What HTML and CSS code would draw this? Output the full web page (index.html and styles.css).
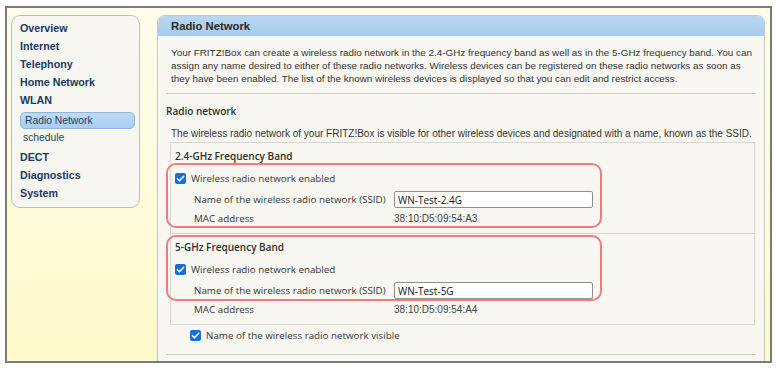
FILE: index.html
```html
<!DOCTYPE html>
<html lang="en">
<head>
<meta charset="utf-8">
<title>Radio Network</title>
<link rel="stylesheet" href="styles.css">
</head>
<body>
<div class="frame">
  <nav class="sidebar">
    <a class="nav-item">Overview</a>
    <a class="nav-item">Internet</a>
    <a class="nav-item">Telephony</a>
    <a class="nav-item">Home Network</a>
    <a class="nav-item">WLAN</a>
    <a class="sub-item active">Radio Network</a>
    <a class="sub-item">schedule</a>
    <a class="nav-item after-sub">DECT</a>
    <a class="nav-item">Diagnostics</a>
    <a class="nav-item">System</a>
  </nav>
  <main class="panel">
    <div class="panel-header">Radio Network</div>
    <div class="panel-body">
      <p class="intro">Your FRITZ!Box can create a wireless radio network in the 2.4-GHz frequency band as well as in the 5-GHz frequency band. You can assign any name desired to either of these radio networks. Wireless devices can be registered on these radio networks as soon as they have been enabled. The list of the known wireless devices is displayed so that you can edit and restrict access.</p>
      <div class="sep"></div>
      <h3 class="section-title">Radio network</h3>
      <p class="desc">The wireless radio network of your FRITZ!Box is visible for other wireless devices and designated with a name, known as the SSID.</p>
      <div class="bands">
        <div class="band">
          <div class="band-title">2.4-GHz Frequency Band</div>
          <div class="check-row">
            <span class="cb"><svg width="11" height="11" viewBox="0 0 11 11"><rect x="0" y="0" width="11" height="11" rx="2" fill="#1a6fd6"/><path d="M2.4 5.7 L4.5 7.8 L8.7 3.3" fill="none" stroke="#fff" stroke-width="1.6" stroke-linecap="round" stroke-linejoin="round"/></svg></span>
            <span class="check-label">Wireless radio network enabled</span>
          </div>
          <div class="field-row">
            <span class="field-label">Name of the wireless radio network (SSID)</span>
            <input class="text-input" type="text" value="WN-Test-2.4G">
          </div>
          <div class="field-row mac">
            <span class="field-label">MAC address</span>
            <span class="field-value">38:10:D5:09:54:A3</span>
          </div>
        </div>
        <div class="band last">
          <div class="band-title">5-GHz Frequency Band</div>
          <div class="check-row">
            <span class="cb"><svg width="11" height="11" viewBox="0 0 11 11"><rect x="0" y="0" width="11" height="11" rx="2" fill="#1a6fd6"/><path d="M2.4 5.7 L4.5 7.8 L8.7 3.3" fill="none" stroke="#fff" stroke-width="1.6" stroke-linecap="round" stroke-linejoin="round"/></svg></span>
            <span class="check-label">Wireless radio network enabled</span>
          </div>
          <div class="field-row">
            <span class="field-label">Name of the wireless radio network (SSID)</span>
            <input class="text-input" type="text" value="WN-Test-5G">
          </div>
          <div class="field-row mac">
            <span class="field-label">MAC address</span>
            <span class="field-value">38:10:D5:09:54:A4</span>
          </div>
        </div>
        <div class="callout callout-first"></div>
        <div class="callout callout-second"></div>
      </div>
      <div class="check-row visible-row">
        <span class="cb"><svg width="11" height="11" viewBox="0 0 11 11"><rect x="0" y="0" width="11" height="11" rx="2" fill="#1a6fd6"/><path d="M2.4 5.7 L4.5 7.8 L8.7 3.3" fill="none" stroke="#fff" stroke-width="1.6" stroke-linecap="round" stroke-linejoin="round"/></svg></span>
        <span class="check-label">Name of the wireless radio network visible</span>
      </div>
      <div class="sep bottom-sep"></div>
    </div>
  </main>
</div>
</body>
</html>
```
FILE: styles.css
```css
html, body {
  margin: 0;
  padding: 0;
  background: #ffffff;
}

body {
  font-family: "Liberation Sans", Arial, sans-serif;
  color: #333;
}

.frame {
  box-sizing: border-box;
  width: 767px;
  height: 357px;
  margin: 6px 0 0 5px;
  border: 2px solid #7a7a7a;
  padding: 7px 5px 0 4px;
  display: flex;
  align-items: flex-start;
  overflow: hidden;
  background: linear-gradient(#fffceb, #fffacb);
}

/* Sidebar */
.sidebar {
  box-sizing: border-box;
  width: 129px;
  flex: none;
  margin-right: 17px;
  padding: 2.5px 4px 4.5px 0;
  background: #f7f6f1;
  border: 1px solid #b5c2c0;
  border-radius: 9px;
  display: flex;
  flex-direction: column;
}

.nav-item {
  display: block;
  padding-left: 8px;
  line-height: 18px;
  height: 18px;
  font-size: 10.7px;
  font-weight: bold;
  color: #1b3961;
}

.nav-item.after-sub {
  margin-top: 2px;
}

.sub-item {
  display: block;
  margin-left: 8px;
  padding-left: 3px;
  line-height: 17px;
  height: 17px;
  font-size: 10.3px;
  color: #1e3d66;
}

.sub-item.active {
  box-sizing: border-box;
  margin-top: 3.5px;
  padding-left: 4px;
  line-height: 15px;
  border: 1px solid #8fb6dc;
  border-radius: 5px;
  background: linear-gradient(#bcdaf4, #a9cef0);
}

/* Panel */
.panel {
  flex: 1;
  align-self: stretch;
  min-width: 0;
  background: #f8f7f2;
  border: 1px solid #bfc9c8;
  border-bottom: none;
  border-radius: 8px 8px 0 0;
  overflow: hidden;
}

.panel-header {
  height: 20px;
  line-height: 20px;
  padding-left: 13px;
  font-size: 11.3px;
  font-weight: bold;
  color: #2a2a2a;
  background: linear-gradient(#b8d8f3, #a5cbec);
}

.panel-body {
  padding: 10px 6px 0 8px;
}

.intro {
  margin: 0;
  padding-left: 5px;
  font-size: 9.9px;
  line-height: 13px;
}

.sep {
  margin-top: 8px;
  margin-right: 2px;
  height: 1px;
  background: #c9ccc4;
}

.section-title {
  margin: 10px 0 0 0;
  font-family: "Open Sans", "Liberation Sans", sans-serif;
  font-size: 10px;
  font-weight: 600;
  line-height: 14px;
  color: #2e2e2e;
}

.desc {
  margin: 9px 0 0 0;
  padding-left: 5px;
  font-size: 10px;
  line-height: 13px;
}

/* Frequency band box */
.bands {
  position: relative;
  margin: 2px 3px 0 4px;
  border: 1px solid #d7d7d1;
}

.band {
  padding: 6px 0 7px 4px;
  border-bottom: 1px solid #d7d7d1;
  font-family: "Open Sans", "Liberation Sans", sans-serif;
  font-size: 9.8px;
  color: #353535;
}

.band.last {
  border-bottom: none;
}

.band-title {
  font-size: 10px;
  font-weight: 600;
  line-height: 14px;
  color: #2e2e2e;
}

.check-row {
  display: flex;
  align-items: center;
  height: 14px;
  margin-top: 8px;
}

.cb {
  display: block;
  width: 11px;
  height: 11px;
  margin-right: 5px;
}

.cb svg {
  display: block;
}

.field-row {
  display: flex;
  align-items: center;
  margin-top: 6px;
  padding-left: 19px;
  min-height: 14px;
}

.field-row.mac {
  margin-top: 4px;
}

.field-label {
  width: 200px;
  flex: none;
  line-height: 14px;
}

.text-input {
  box-sizing: border-box;
  width: 199px;
  height: 17px;
  margin: 0;
  padding: 0 3px;
  border: 1px solid #8e8e8e;
  border-radius: 2px;
  background: #fff;
  font-family: "Open Sans", "Liberation Sans", sans-serif;
  font-size: 10px;
  color: #111;
  outline: none;
}

.field-value {
  font-family: "Liberation Sans", Arial, sans-serif;
  font-size: 10px;
  color: #444;
  line-height: 14px;
}

/* Annotation callouts */
.callout {
  position: absolute;
  left: -5px;
  width: 436px;
  box-sizing: border-box;
  border: 2px solid #f27b7b;
  border-radius: 10px;
  pointer-events: none;
}

.callout-first {
  top: 20px;
  height: 65px;
}

.callout-second {
  top: 92px;
  height: 66px;
}

.visible-row {
  margin-top: 3px;
  padding-left: 24px;
  font-family: "Open Sans", "Liberation Sans", sans-serif;
  font-size: 9.8px;
  color: #353535;
}

.bottom-sep {
  margin-top: 12px;
  background: #c3cfcd;
}
```
